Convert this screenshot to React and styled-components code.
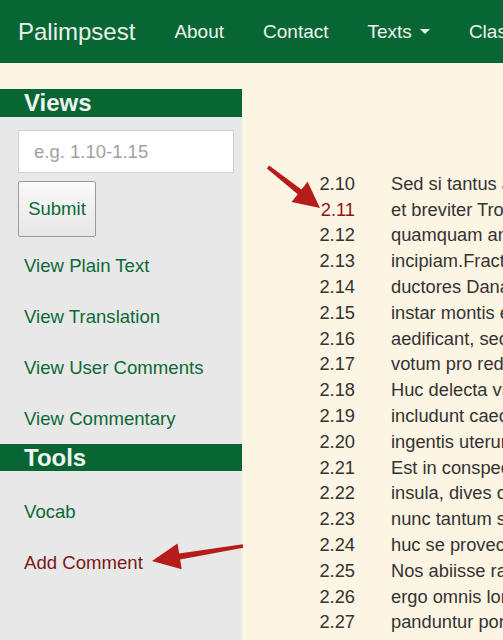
import React from "react";
import styled, { createGlobalStyle } from "styled-components";

const GlobalStyle = createGlobalStyle`
  body {
    margin: 0;
    background: #fdf5e3;
    font-family: "Liberation Sans", Arial, sans-serif;
    overflow: hidden;
  }
`;

const Page = styled.div`
  position: relative;
  width: 100%;
  overflow: hidden;
`;

const Navbar = styled.nav`
  height: 63px;
  background: #086634;
  display: flex;
  align-items: center;
  padding-left: 18px;
  white-space: nowrap;
`;

const Brand = styled.a`
  font-size: 24px;
  color: #e9f1ea;
  margin-right: 39px;
`;

const NavLink = styled.a`
  font-size: 19px;
  color: #eef4ef;
  margin-right: 39px;
  display: flex;
  align-items: center;
`;

const Caret = styled.span`
  display: inline-block;
  margin-left: 8px;
  width: 0;
  height: 0;
  border-left: 5px solid transparent;
  border-right: 5px solid transparent;
  border-top: 5px solid #eef4ef;
`;

const Main = styled.div`
  display: flex;
  align-items: stretch;
`;

const Sidebar = styled.aside`
  width: 242px;
  flex-shrink: 0;
  margin-top: 26px;
  background: #e8e8e8;
`;

const SectionTitle = styled.h2`
  margin: 0;
  height: ${(p) => p.$h}px;
  line-height: ${(p) => p.$h}px;
  background: #086634;
  color: #eef4ef;
  font-size: 24px;
  font-weight: bold;
  padding-left: 24px;
`;

const Form = styled.form`
  padding: 13px 8px 0 18px;
  display: flex;
  flex-direction: column;
  align-items: flex-start;
  gap: 8px;
`;

const Input = styled.input`
  box-sizing: border-box;
  width: 216px;
  height: 43px;
  border: 1px solid #d0d0d0;
  background: #fff;
  padding: 0 15px;
  font-family: inherit;
  font-size: 18.5px;
  color: #333;
  outline: none;
  &::placeholder {
    color: #a0a0a0;
  }
`;

const Button = styled.button`
  box-sizing: border-box;
  width: 78px;
  height: 56px;
  border: 1px solid #9a9a9a;
  border-radius: 2px;
  background: linear-gradient(#fafafa, #e6e6e6);
  color: #0b6a37;
  font-family: inherit;
  font-size: 18.5px;
  padding: 0;
`;

const LinkList = styled.ul`
  list-style: none;
  margin: 0;
  padding: ${(p) => p.$top}px 0 0;
`;

const LinkItem = styled.li`
  height: 51px;
  display: flex;
  align-items: center;
  padding-left: 24px;
  font-size: 18.6px;
  color: ${(p) => (p.$active ? "#7b1818" : "#0b6a37")};
`;

const Content = styled.div`
  flex: 1;
  padding: 108px 0 0 53px;
  white-space: nowrap;
`;

const Row = styled.div`
  display: flex;
  height: 25.8px;
  align-items: center;
  font-size: 18.3px;
  color: #333;
`;

const Num = styled.span`
  width: 60px;
  text-align: right;
  margin-right: 36px;
  flex-shrink: 0;
  color: ${(p) => (p.$hl ? "#8a1515" : "#333")};
`;

const Overlay = styled.svg`
  position: absolute;
  left: 0;
  top: 0;
  pointer-events: none;
`;

const lines = [
  ["2.10", "Sed si tantus amor casus cognoscere nostros"],
  ["2.11", "et breviter Troiae supremum audire laborem,"],
  ["2.12", "quamquam animus meminisse horret luctuque refugit,"],
  ["2.13", "incipiam.Fracti bello fatisque repulsi"],
  ["2.14", "ductores Danaum tot iam labentibus annis"],
  ["2.15", "instar montis equum divina Palladis arte"],
  ["2.16", "aedificant, sectaque intexunt abiete costas;"],
  ["2.17", "votum pro reditu simulant; ea fama vagatur."],
  ["2.18", "Huc delecta virum sortiti corpora furtim"],
  ["2.19", "includunt caeco lateri penitusque cavernas"],
  ["2.20", "ingentis uterumque armato milite complent."],
  ["2.21", "Est in conspectu Tenedos, notissima fama"],
  ["2.22", "insula, dives opum, Priami dum regna manebant,"],
  ["2.23", "nunc tantum sinus et statio male fida carinis:"],
  ["2.24", "huc se provecti deserto in litore condunt;"],
  ["2.25", "Nos abiisse rati et vento petiisse Mycenas."],
  ["2.26", "ergo omnis longo solvit se Teucria luctu;"],
  ["2.27", "panduntur portae, iuvat ire et Dorica castra"],
  ["2.28", "desertosque videre locos litusque relictum:"],
];

// arrow polygon from tail to tip
function arrowPoints(x1, y1, x2, y2, headLen, headW, shaft) {
  const dx = x2 - x1;
  const dy = y2 - y1;
  const len = Math.hypot(dx, dy);
  const ux = dx / len;
  const uy = dy / len;
  const nx = -uy;
  const ny = ux;
  const bx = x2 - ux * headLen;
  const by = y2 - uy * headLen;
  const pts = [
    [x1 + nx * shaft * 0.6, y1 + ny * shaft * 0.6],
    [bx + nx * shaft, by + ny * shaft],
    [bx + nx * headW, by + ny * headW],
    [x2, y2],
    [bx - nx * headW, by - ny * headW],
    [bx - nx * shaft, by - ny * shaft],
    [x1 - nx * shaft * 0.6, y1 - ny * shaft * 0.6],
  ];
  return pts.map((p) => p.join(",")).join(" ");
}

export default function App() {
  return (
    <Page>
      <GlobalStyle />
      <Navbar>
        <Brand>Palimpsest</Brand>
        <NavLink>About</NavLink>
        <NavLink>Contact</NavLink>
        <NavLink>
          Texts <Caret />
        </NavLink>
        <NavLink>Classics</NavLink>
      </Navbar>
      <Main>
        <Sidebar>
          <SectionTitle $h={28}>Views</SectionTitle>
          <Form onSubmit={(e) => e.preventDefault()}>
            <Input placeholder="e.g. 1.10-1.15" />
            <Button type="submit">Submit</Button>
          </Form>
          <LinkList $top={3}>
            <LinkItem>View Plain Text</LinkItem>
            <LinkItem>View Translation</LinkItem>
            <LinkItem>View User Comments</LinkItem>
            <LinkItem>View Commentary</LinkItem>
          </LinkList>
          <SectionTitle $h={27}>Tools</SectionTitle>
          <LinkList $top={15}>
            <LinkItem>Vocab</LinkItem>
            <LinkItem $active>Add Comment</LinkItem>
          </LinkList>
        </Sidebar>
        <Content>
          {lines.map(([n, t]) => (
            <Row key={n}>
              <Num $hl={n === "2.11"}>{n}</Num>
              <span>{t}</span>
            </Row>
          ))}
        </Content>
      </Main>
      <Overlay width="503" height="640">
        <polygon
          points={arrowPoints(268, 167, 320, 208, 26, 13, 3)}
          fill="#b51d1b"
        />
        <polygon
          points={arrowPoints(243, 546, 152, 561, 28, 13, 3)}
          fill="#b51d1b"
        />
      </Overlay>
    </Page>
  );
}
